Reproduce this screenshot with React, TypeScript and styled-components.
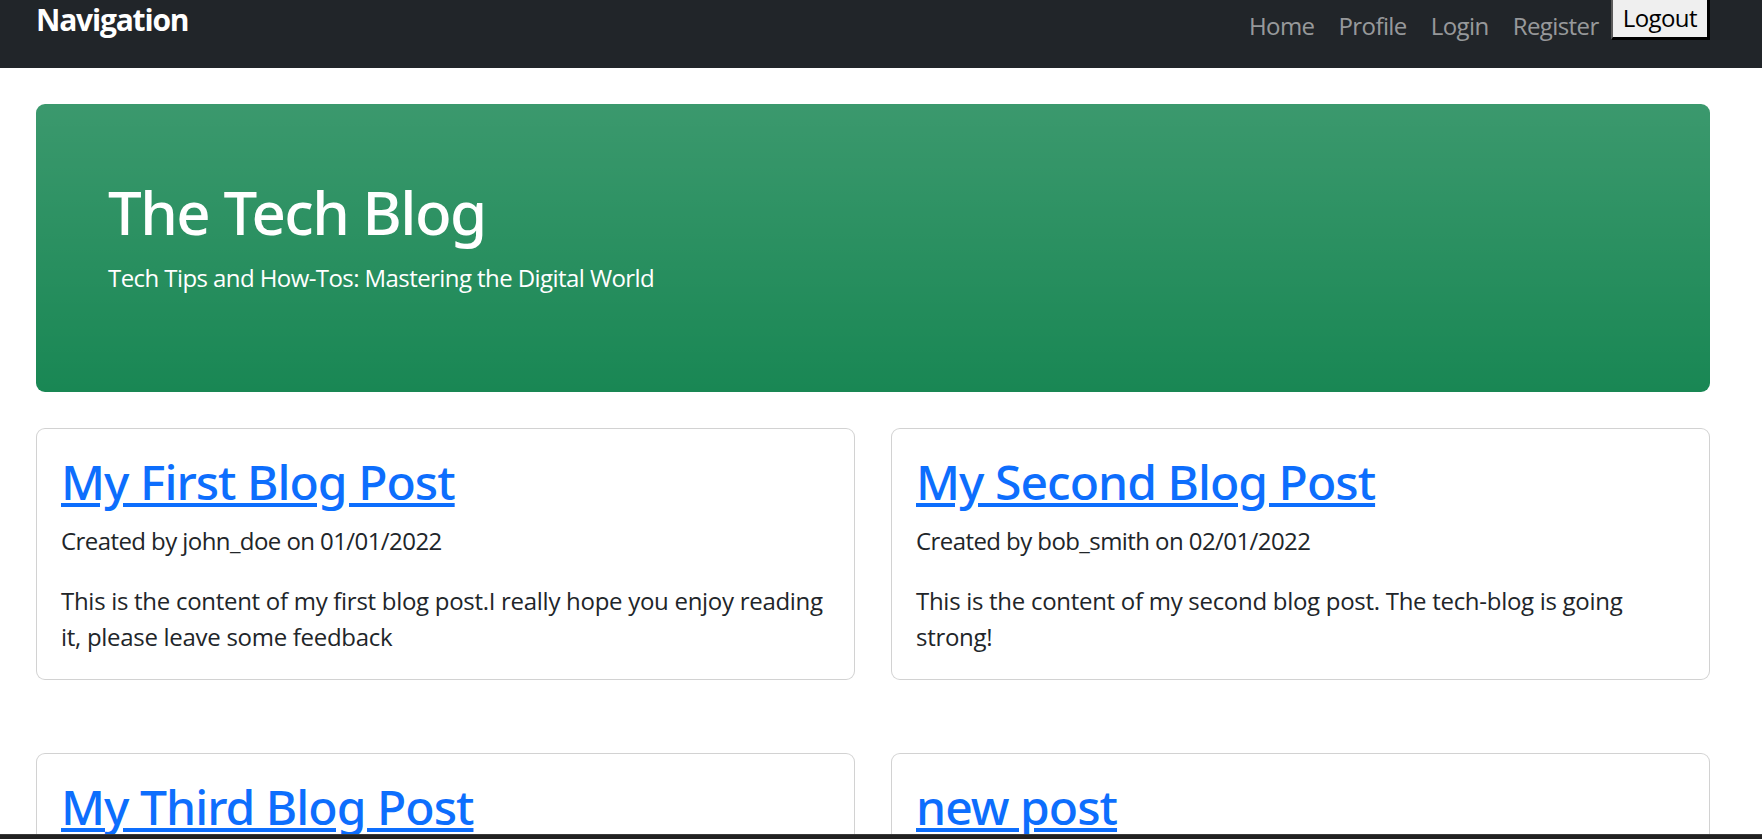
import React from "react";
import styled, { createGlobalStyle } from "styled-components";

const GlobalStyle = createGlobalStyle`
  *, *::before, *::after { box-sizing: border-box; }
  html, body { margin: 0; padding: 0; }
  body {
    font-family: "Open Sans", "Noto Sans", "Liberation Sans", sans-serif;
    font-size: 24px;
    line-height: 1.5;
    color: #212529;
    background: #fff;
  }
  ::-webkit-scrollbar { display: none; }
`;

const headingFont = `"Noto Sans", "Open Sans", "Liberation Sans", sans-serif`;

const Navbar = styled.nav`
  display: flex;
  align-items: flex-start;
  height: 68px;
  padding: 0 52px 0 36px;
  background: #212529;
`;

const Brand = styled.a`
  padding-top: 5px;
  font-size: 30px;
  font-weight: 700;
  line-height: 30px;
  letter-spacing: -0.04em;
  color: #fff;
  text-decoration: none;
`;

const NavList = styled.ul`
  display: flex;
  margin: 0 0 0 auto;
  padding: 0;
  list-style: none;
`;

const NavLink = styled.a`
  display: block;
  padding: 8px 12px 0;
  font-size: 24px;
  line-height: 36px;
  letter-spacing: -0.024em;
  color: rgba(255, 255, 255, 0.55);
  text-decoration: none;
`;

const LogoutButton = styled.button`
  padding: 0 10px 1px;
  font-family: inherit;
  font-size: 24px;
  line-height: 36px;
  letter-spacing: -0.024em;
  color: #000;
  background: #efefef;
  border: 0;
  border-left: 2px solid #5a5a5a;
  border-right: 3px solid #000;
  border-bottom: 3px solid #000;
  border-radius: 0;
`;

const Main = styled.main`
  padding: 36px 52px 0 36px;
`;

const Hero = styled.header`
  padding: 72px;
  border-radius: 9px;
  color: #fff;
  background: #198754
    linear-gradient(180deg, rgba(255, 255, 255, 0.15), rgba(255, 255, 255, 0));
`;

const HeroTitle = styled.h1`
  margin: 0 0 12px;
  font-family: ${headingFont};
  font-size: 60px;
  font-weight: 500;
  line-height: 72px;
  letter-spacing: -0.025em;
`;

const HeroLead = styled.p`
  margin: 0 0 24px;
  font-size: 24px;
  line-height: 36px;
  letter-spacing: -0.024em;
`;

const PostGrid = styled.section`
  display: grid;
  grid-template-columns: 1fr 1fr;
  column-gap: 36px;
  row-gap: 73px;
  margin-top: 36px;
`;

const Card = styled.article`
  padding: 24px;
  background: #fff;
  border: 1px solid rgba(0, 0, 0, 0.175);
  border-radius: 9px;
`;

const CardTitle = styled.h2`
  margin: 0 0 12px;
  font-family: ${headingFont};
  font-size: 48px;
  font-weight: 500;
  line-height: 57.6px;
  letter-spacing: -0.02em;
`;

const TitleLink = styled.a`
  color: #0d6efd;
  text-decoration: underline;
`;

const CardMeta = styled.p`
  margin: 0 0 24px;
  letter-spacing: -0.024em;
`;

const CardText = styled.p`
  margin: 0;
  letter-spacing: -0.012em;
`;

const WindowEdge = styled.div`
  position: fixed;
  left: 0;
  right: 0;
  bottom: 0;
  height: 5px;
  background: #212121;
  border-top: 1px solid #3a3a3a;
`;

type Post = { title: string; author?: string; date?: string; body?: string };

const posts: Post[] = [
  {
    title: "My First Blog Post",
    author: "john_doe",
    date: "01/01/2022",
    body: "This is the content of my first blog post.I really hope you enjoy reading it, please leave some feedback",
  },
  {
    title: "My Second Blog Post",
    author: "bob_smith",
    date: "02/01/2022",
    body: "This is the content of my second blog post. The tech-blog is going strong!",
  },
  { title: "My Third Blog Post" },
  { title: "new post" },
];

export default function App() {
  return (
    <>
      <GlobalStyle />
      <Navbar>
        <Brand href="#">Navigation</Brand>
        <NavList>
          {["Home", "Profile", "Login", "Register"].map((l) => (
            <li key={l}>
              <NavLink href="#">{l}</NavLink>
            </li>
          ))}
        </NavList>
        <LogoutButton>Logout</LogoutButton>
      </Navbar>
      <Main>
        <Hero>
          <HeroTitle>The Tech Blog</HeroTitle>
          <HeroLead>Tech Tips and How-Tos: Mastering the Digital World</HeroLead>
        </Hero>
        <PostGrid>
          {posts.map((p) => (
            <Card key={p.title}>
              <CardTitle>
                <TitleLink href="#">{p.title}</TitleLink>
              </CardTitle>
              {p.author && (
                <CardMeta>
                  Created by {p.author} on {p.date}
                </CardMeta>
              )}
              {p.body && <CardText>{p.body}</CardText>}
            </Card>
          ))}
        </PostGrid>
      </Main>
      <WindowEdge />
    </>
  );
}
